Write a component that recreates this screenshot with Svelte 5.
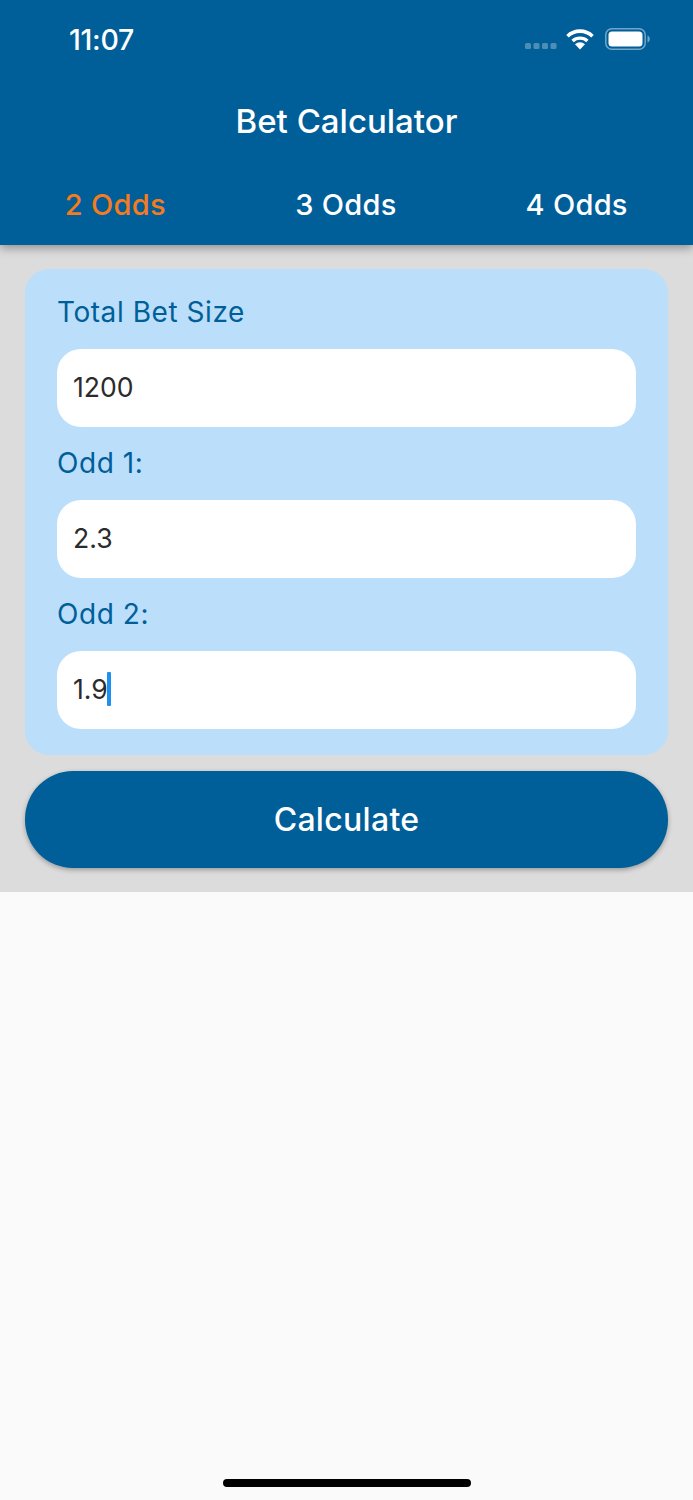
<script lang="ts">
const tabs = ["2 Odds", "3 Odds", "4 Odds"];
const fields = [
	{ label: "Total Bet Size", value: "1200" },
	{ label: "Odd 1:", value: "2.3" },
	{ label: "Odd 2:", value: "1.9", focused: true },
];
let activeTab = $state(0);
</script>

<div class="screen">
  <header class="header">
    <div class="status-bar">
      <span class="time">11:07</span>
      <div class="status-icons">
        <svg class="signal" width="32" height="6" viewBox="0 0 32 6">
          <rect x="0" y="0" width="6" height="6" rx="1.5" />
          <rect x="8.5" y="0" width="6" height="6" rx="1.5" />
          <rect x="17" y="0" width="6" height="6" rx="1.5" />
          <rect x="25.5" y="0" width="6" height="6" rx="1.5" />
        </svg>
        <svg class="wifi" width="28" height="21" viewBox="0 0 28 21">
          <path d="M1.5 7.2A18 18 0 0 1 26.5 7.2" fill="none" stroke="#fff" stroke-width="3.6" />
          <path d="M6.6 12A11 11 0 0 1 21.4 12" fill="none" stroke="#fff" stroke-width="3.4" />
          <path d="M9 15.2a7.2 7.2 0 0 1 10 0L14 20.6z" fill="#fff" />
        </svg>
        <svg class="battery" width="45" height="22" viewBox="0 0 45 22">
          <rect x="0.8" y="0.8" width="39.4" height="20.4" rx="6" fill="none" stroke="#fff" stroke-opacity="0.45" stroke-width="1.5" />
          <rect x="3.5" y="3.5" width="34" height="15" rx="3.5" fill="#fff" />
          <path d="M42.5 7.5c1.5.5 2.3 2 2.3 3.5s-.8 3-2.3 3.5z" fill="#fff" fill-opacity="0.45" />
        </svg>
      </div>
    </div>
    <h1 class="title">Bet Calculator</h1>
    <nav class="tabs">
      {#each tabs as tab, i}
        <button type="button" class="tab" class:active={i === activeTab} onclick={() => (activeTab = i)}>{tab}</button>
      {/each}
    </nav>
  </header>

  <main class="content">
    <section class="card">
      {#each fields as field}
        <div class="field">
          <span class="label">{field.label}</span>
          <div class="input">
            <span>{field.value}</span>{#if field.focused}<i class="caret"></i>{/if}
          </div>
        </div>
      {/each}
    </section>
    <button type="button" class="calculate">Calculate</button>
  </main>

  <div class="home-bar"><span class="home-indicator"></span></div>
</div>

<style>
  :global(body) {
    margin: 0;
    background: #fafafa;
  }

  .screen {
    width: 693px;
    height: 1500px;
    display: flex;
    flex-direction: column;
    overflow: hidden;
    background: #fafafa;
    font-family: Inter, "Liberation Sans", sans-serif;
  }

  .header {
    position: relative;
    z-index: 1;
    height: 245px;
    flex-shrink: 0;
    background: #005e98;
    color: #fff;
    box-shadow: 0 3px 9px rgba(0, 0, 0, 0.35);
  }

  .status-bar {
    height: 78px;
    box-sizing: border-box;
    padding: 0 43px 0 69px;
    display: flex;
    align-items: center;
    justify-content: space-between;
  }

  .time {
    font-size: 28.5px;
    font-weight: 500;
    letter-spacing: -0.3px;
  }

  .status-icons {
    display: flex;
    align-items: center;
  }

  .signal {
    fill: rgba(255, 255, 255, 0.3);
    margin: 14px 9px 0 0;
  }

  .wifi {
    margin-right: 11px;
  }

  .title {
    margin: 0;
    height: 87px;
    line-height: 87px;
    text-align: center;
    font-size: 33px;
    font-weight: 500;
  }

  .tabs {
    display: grid;
    grid-template-columns: repeat(3, 1fr);
    padding-right: 1px;
  }

  .tab {
    height: 78px;
    padding: 0;
    border: 0;
    background: none;
    color: #fff;
    font: inherit;
    font-size: 29px;
    font-weight: 500;
    letter-spacing: 0.3px;
  }

  .tab.active {
    color: #f47b20;
  }

  .content {
    height: 647px;
    flex-shrink: 0;
    box-sizing: border-box;
    padding: 24px 25px;
    background: #dcdcdc;
    display: flex;
    flex-direction: column;
    gap: 16px;
  }

  .card {
    height: 486px;
    box-sizing: border-box;
    padding: 18px 32px 0;
    border-radius: 24px;
    background: #bbdefb;
    display: flex;
    flex-direction: column;
    gap: 11px;
  }

  .label {
    display: block;
    height: 50px;
    line-height: 50px;
    font-size: 28px;
    color: #005e98;
    letter-spacing: 0.55px;
  }

  .field {
    display: flex;
    flex-direction: column;
    gap: 12px;
  }

  .input {
    height: 78px;
    box-sizing: border-box;
    padding: 0 16px 2px;
    border-radius: 24px;
    background: #fff;
    display: flex;
    align-items: center;
    font-size: 26.6px;
    color: #2b2b2b;
  }

  .caret {
    width: 4px;
    height: 34px;
    margin-left: -1px;
    border-radius: 1px;
    background: #1e90f0;
  }

  .calculate {
    height: 97px;
    padding: 0;
    border: 0;
    border-radius: 48px;
    background: #005e98;
    color: #fff;
    font: inherit;
    font-size: 32px;
    font-weight: 500;
    letter-spacing: 0.3px;
    box-shadow: 0 2px 5px rgba(0, 0, 0, 0.3);
  }

  .home-bar {
    flex: 1;
    display: flex;
    align-items: flex-end;
    justify-content: center;
    padding-bottom: 13px;
  }

  .home-indicator {
    width: 248px;
    height: 8px;
    border-radius: 4px;
    background: #000;
  }
</style>
